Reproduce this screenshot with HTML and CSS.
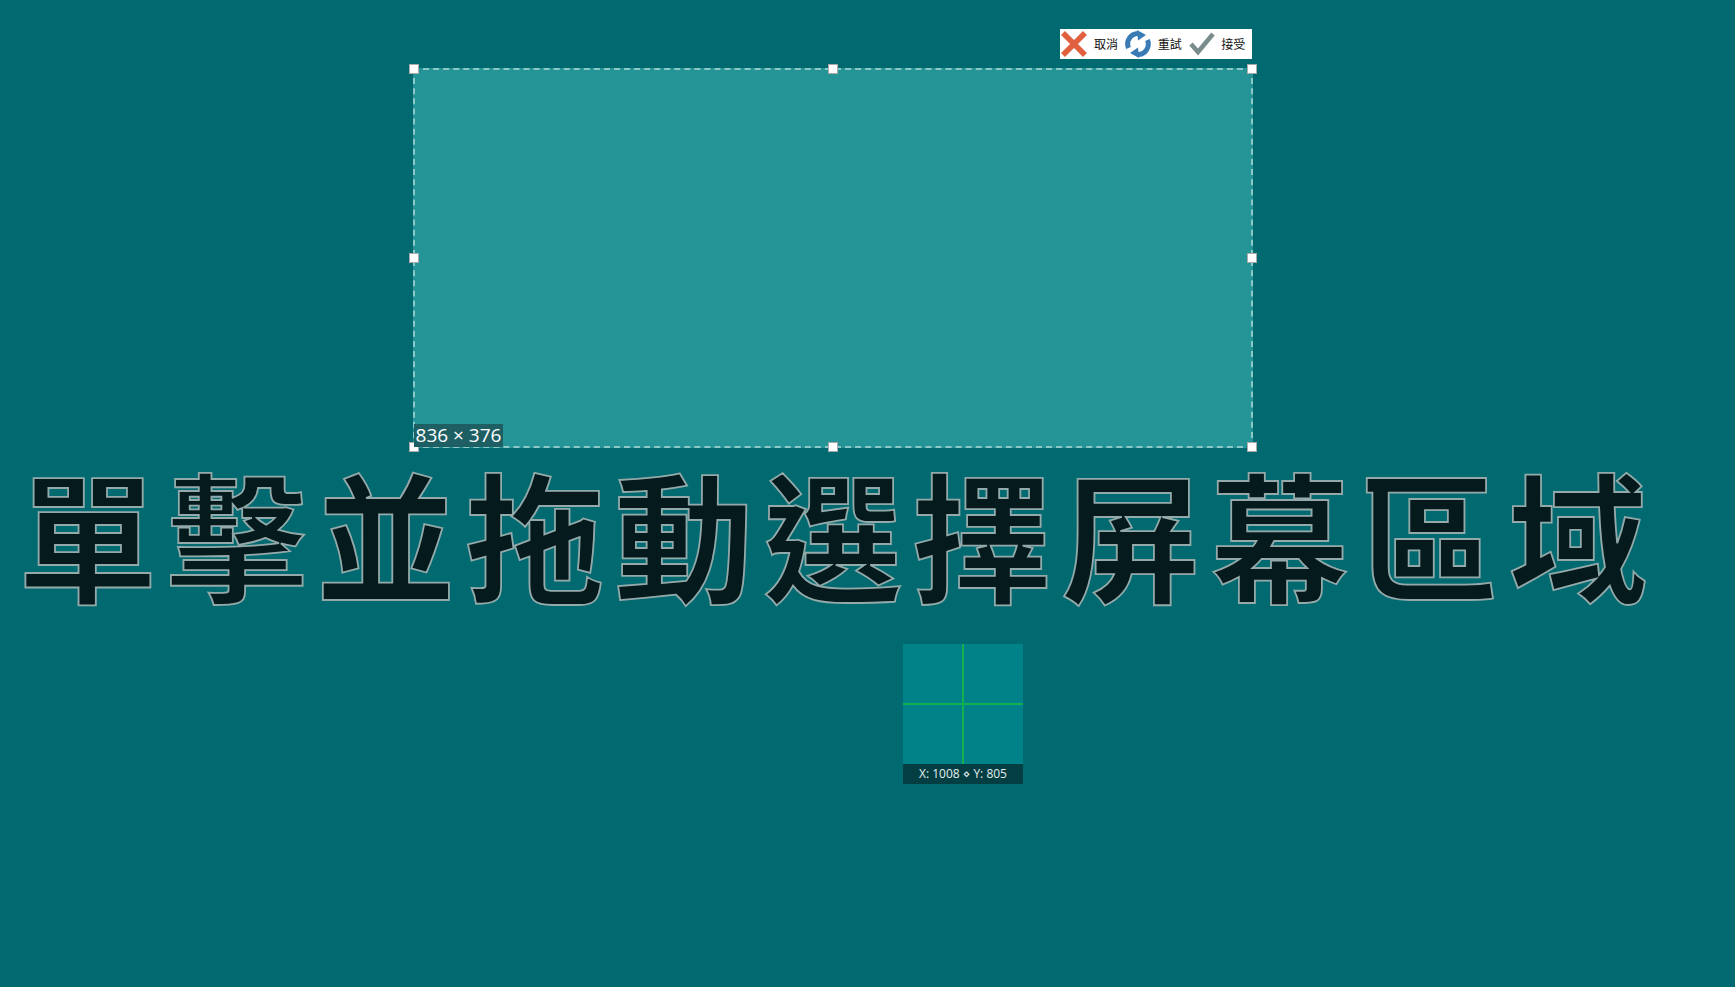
FILE: index.html
```html
<!DOCTYPE html>
<html lang="zh-Hant">
<head>
<meta charset="utf-8">
<title>Region capture</title>
<link rel="stylesheet" href="styles.css">
</head>
<body>
<main class="stage">
  <div class="toolbar">
    <div class="tool">
      <svg class="tool-icon" viewBox="0 0 26 26"><path class="x" d="M2 2 L24 24 M24 2 L2 24"/></svg>
      <span class="tool-label">取消</span>
    </div>
    <div class="tool">
      <svg class="tool-icon" viewBox="0 0 26 26"><path class="r" d="M3.5 17 A10.5 10.5 0 0 1 13 2.5 M22.5 9 A10.5 10.5 0 0 1 13 23.5"/><path class="rf" d="M12 -1 L21 4 L13 9.5 Z M14 27 L5 22 L13 16.5 Z"/></svg>
      <span class="tool-label">重試</span>
    </div>
    <div class="tool">
      <svg class="tool-icon" viewBox="0 0 26 26"><path class="c" d="M3 13 L10 21 L25 3"/></svg>
      <span class="tool-label">接受</span>
    </div>
  </div>

  <div class="selection">
    <span class="handle h-tl"></span><span class="handle h-tc"></span><span class="handle h-tr"></span>
    <span class="handle h-ml"></span><span class="handle h-mr"></span>
    <span class="handle h-bl"></span><span class="handle h-bc"></span><span class="handle h-br"></span>
    <span class="size-label">836 × 376</span>
  </div>

  <h1 class="prompt">單擊並拖動選擇屏幕區域</h1>

  <div class="loupe">
    <div class="loupe-view"><i class="cross-v"></i><i class="cross-h"></i></div>
    <div class="loupe-info">X: 1008 <span class="sep">⋄</span> Y: 805</div>
  </div>
</main>
</body>
</html>
```
FILE: styles.css
```css
html, body { margin: 0; height: 100%; }
body { background: #006a70; overflow: hidden; }
.stage { position: relative; width: 1735px; height: 987px; background: #006a70; }

.toolbar {
  position: absolute; left: 1060px; top: 29px; width: 192px; height: 30px;
  background: #fff; display: flex; align-items: center; padding-left: 1px; box-sizing: border-box;
}
.tool { display: flex; align-items: center; width: 64.5px; height: 30px; }
.tool-icon { width: 26px; height: 26px; flex: none; overflow: visible; }
.tool-label { margin: 0 0 2px 7px; font: 12px "Noto Sans CJK TC", sans-serif; color: #111; white-space: nowrap; }
.x { stroke: #e0603f; stroke-width: 5.5; fill: none; }
.r { stroke: #3a7ab5; stroke-width: 5; fill: none; }
.rf { fill: #3a7ab5; }
.c { stroke: #7a8b8c; stroke-width: 4.5; fill: none; }

.selection {
  position: absolute; left: 413px; top: 68px; width: 836px; height: 376px;
  box-sizing: content-box; background: #249497; border: 2px dashed #8cc8c8;
}
.handle {
  position: absolute; width: 8px; height: 8px; background: #fff; border: 1px solid #aaa; box-sizing: content-box;
}
.h-tl { left: -6px; top: -6px; }
.h-tc { left: 413px; top: -6px; }
.h-tr { right: -6px; top: -6px; }
.h-ml { left: -6px; top: 183px; }
.h-mr { right: -6px; top: 183px; }
.h-bl { left: -6px; bottom: -6px; }
.h-bc { left: 413px; bottom: -6px; }
.h-br { right: -6px; bottom: -6px; }
.size-label {
  position: absolute; left: -1px; bottom: -1px; height: 23px; width: 89px;
  background: #1d5f63; color: #fff; text-align: center;
  font: 19px/23px "Open Sans", sans-serif; white-space: nowrap;
}

.prompt {
  position: absolute; left: 18px; top: 461px; margin: 0;
  font: 700 139.5px/140px "Noto Sans CJK TC", sans-serif; letter-spacing: 9.5px;
  color: #041a1c; white-space: nowrap;
  -webkit-text-stroke: 1.8px #93a9aa; paint-order: fill stroke;
}

.loupe { position: absolute; left: 903px; top: 644px; width: 120px; }
.loupe-view { position: relative; height: 120px; background: #008288; }
.cross-v { position: absolute; left: 59px; top: 0; width: 2px; height: 120px; background: #12b04e; }
.cross-h { position: absolute; left: 0; top: 59px; width: 120px; height: 2px; background: #12b04e; }
.loupe-info {
  height: 20px; background: #033e43; color: #e4eeee; text-align: center;
  font: 12px/20px "Open Sans", sans-serif; white-space: nowrap;
}
.sep { font-family: "DejaVu Sans", sans-serif; }
```
